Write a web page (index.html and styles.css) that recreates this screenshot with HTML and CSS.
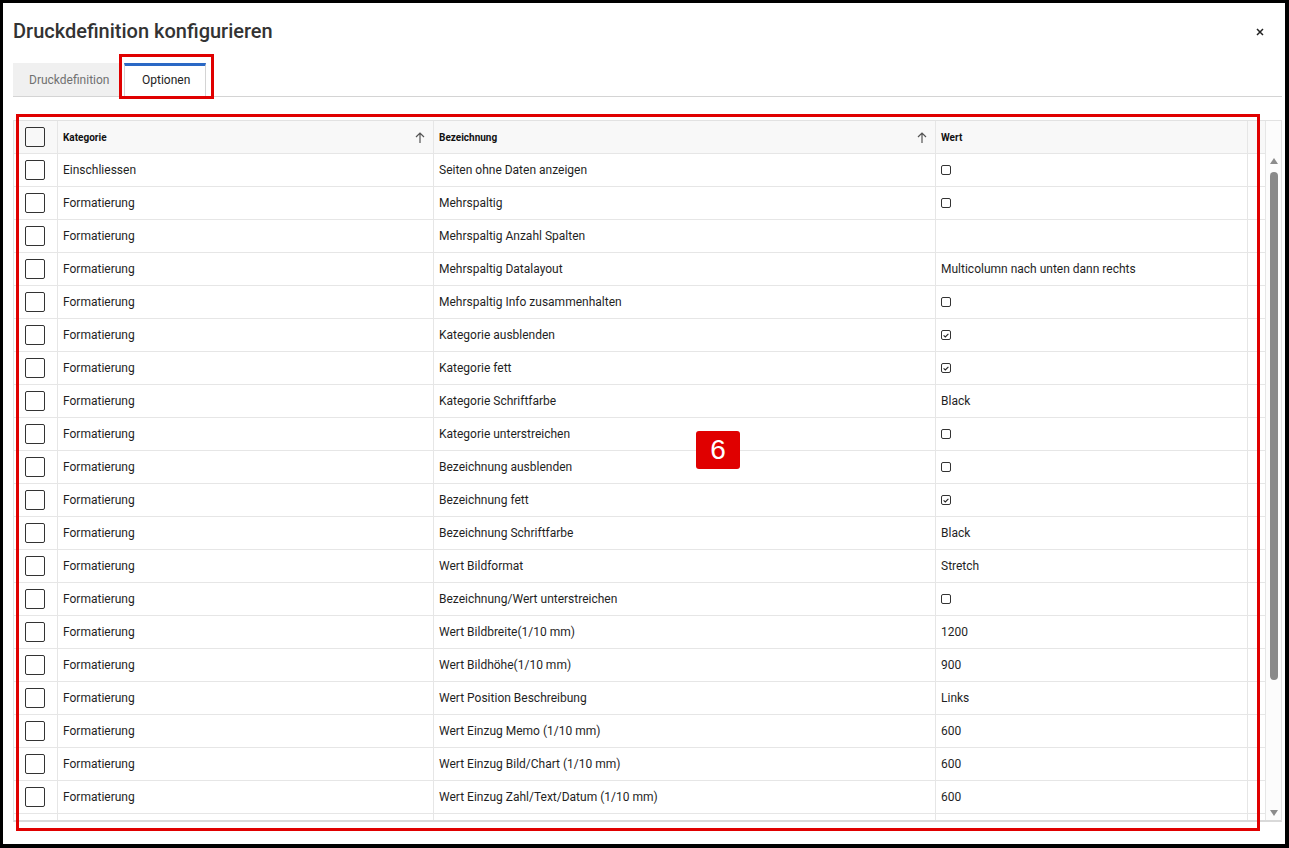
FILE: index.html
```html
<!DOCTYPE html>
<html lang="de">
<head>
    <meta charset="UTF-8">
    <title>Druckdefinition konfigurieren</title>
    <link rel="stylesheet" href="styles.css">
</head>
<body>
<div class="frame">
    <div class="dialog">
        <div class="dialog-head">
            <h1>Druckdefinition konfigurieren</h1>
            <span class="close">
                <svg width="8" height="8" viewBox="0 0 8 8"><path d="M1 1L7 7M7 1L1 7" stroke="#222" stroke-width="1.5" fill="none"/></svg>
            </span>
        </div>

        <div class="tabs">
            <div class="tab">Druckdefinition</div>
            <div class="tab active">Optionen</div>
        </div>

        <div class="grid">
            <div class="grid-main">
                <div class="row head">
                    <div class="cell sel"><span class="chk"></span></div>
                    <div class="cell">Kategorie <span class="sort"><svg width="10" height="11" viewBox="0 0 10 11"><path d="M5 1V11M1 5L5 1L9 5" stroke="#555" stroke-width="1.2" fill="none"/></svg></span></div>
                    <div class="cell">Bezeichnung <span class="sort"><svg width="10" height="11" viewBox="0 0 10 11"><path d="M5 1V11M1 5L5 1L9 5" stroke="#555" stroke-width="1.2" fill="none"/></svg></span></div>
                    <div class="cell">Wert</div>
                    <div class="cell gap"></div>
                </div>
                <div class="rows">
                    <div class="row"><div class="cell sel"><span class="chk"></span></div><div class="cell">Einschliessen</div><div class="cell">Seiten ohne Daten anzeigen</div><div class="cell"><span class="mini"></span></div><div class="cell gap"></div></div>
                    <div class="row"><div class="cell sel"><span class="chk"></span></div><div class="cell">Formatierung</div><div class="cell">Mehrspaltig</div><div class="cell"><span class="mini"></span></div><div class="cell gap"></div></div>
                    <div class="row"><div class="cell sel"><span class="chk"></span></div><div class="cell">Formatierung</div><div class="cell">Mehrspaltig Anzahl Spalten</div><div class="cell"></div><div class="cell gap"></div></div>
                    <div class="row"><div class="cell sel"><span class="chk"></span></div><div class="cell">Formatierung</div><div class="cell">Mehrspaltig Datalayout</div><div class="cell">Multicolumn nach unten dann rechts</div><div class="cell gap"></div></div>
                    <div class="row"><div class="cell sel"><span class="chk"></span></div><div class="cell">Formatierung</div><div class="cell">Mehrspaltig Info zusammenhalten</div><div class="cell"><span class="mini"></span></div><div class="cell gap"></div></div>
                    <div class="row"><div class="cell sel"><span class="chk"></span></div><div class="cell">Formatierung</div><div class="cell">Kategorie ausblenden</div><div class="cell"><span class="mini on"><svg width="6" height="5" viewBox="0 0 6 5"><path d="M0.6 2.4L2.3 4L5.4 0.8" stroke="#222" stroke-width="1.1" fill="none"/></svg></span></div><div class="cell gap"></div></div>
                    <div class="row"><div class="cell sel"><span class="chk"></span></div><div class="cell">Formatierung</div><div class="cell">Kategorie fett</div><div class="cell"><span class="mini on"><svg width="6" height="5" viewBox="0 0 6 5"><path d="M0.6 2.4L2.3 4L5.4 0.8" stroke="#222" stroke-width="1.1" fill="none"/></svg></span></div><div class="cell gap"></div></div>
                    <div class="row"><div class="cell sel"><span class="chk"></span></div><div class="cell">Formatierung</div><div class="cell">Kategorie Schriftfarbe</div><div class="cell">Black</div><div class="cell gap"></div></div>
                    <div class="row"><div class="cell sel"><span class="chk"></span></div><div class="cell">Formatierung</div><div class="cell">Kategorie unterstreichen</div><div class="cell"><span class="mini"></span></div><div class="cell gap"></div></div>
                    <div class="row"><div class="cell sel"><span class="chk"></span></div><div class="cell">Formatierung</div><div class="cell">Bezeichnung ausblenden</div><div class="cell"><span class="mini"></span></div><div class="cell gap"></div></div>
                    <div class="row"><div class="cell sel"><span class="chk"></span></div><div class="cell">Formatierung</div><div class="cell">Bezeichnung fett</div><div class="cell"><span class="mini on"><svg width="6" height="5" viewBox="0 0 6 5"><path d="M0.6 2.4L2.3 4L5.4 0.8" stroke="#222" stroke-width="1.1" fill="none"/></svg></span></div><div class="cell gap"></div></div>
                    <div class="row"><div class="cell sel"><span class="chk"></span></div><div class="cell">Formatierung</div><div class="cell">Bezeichnung Schriftfarbe</div><div class="cell">Black</div><div class="cell gap"></div></div>
                    <div class="row"><div class="cell sel"><span class="chk"></span></div><div class="cell">Formatierung</div><div class="cell">Wert Bildformat</div><div class="cell">Stretch</div><div class="cell gap"></div></div>
                    <div class="row"><div class="cell sel"><span class="chk"></span></div><div class="cell">Formatierung</div><div class="cell">Bezeichnung/Wert unterstreichen</div><div class="cell"><span class="mini"></span></div><div class="cell gap"></div></div>
                    <div class="row"><div class="cell sel"><span class="chk"></span></div><div class="cell">Formatierung</div><div class="cell">Wert Bildbreite(1/10 mm)</div><div class="cell">1200</div><div class="cell gap"></div></div>
                    <div class="row"><div class="cell sel"><span class="chk"></span></div><div class="cell">Formatierung</div><div class="cell">Wert Bildhöhe(1/10 mm)</div><div class="cell">900</div><div class="cell gap"></div></div>
                    <div class="row"><div class="cell sel"><span class="chk"></span></div><div class="cell">Formatierung</div><div class="cell">Wert Position Beschreibung</div><div class="cell">Links</div><div class="cell gap"></div></div>
                    <div class="row"><div class="cell sel"><span class="chk"></span></div><div class="cell">Formatierung</div><div class="cell">Wert Einzug Memo (1/10 mm)</div><div class="cell">600</div><div class="cell gap"></div></div>
                    <div class="row"><div class="cell sel"><span class="chk"></span></div><div class="cell">Formatierung</div><div class="cell">Wert Einzug Bild/Chart (1/10 mm)</div><div class="cell">600</div><div class="cell gap"></div></div>
                    <div class="row"><div class="cell sel"><span class="chk"></span></div><div class="cell">Formatierung</div><div class="cell">Wert Einzug Zahl/Text/Datum (1/10 mm)</div><div class="cell">600</div><div class="cell gap"></div></div>
                    <div class="row"><div class="cell sel"></div><div class="cell"></div><div class="cell"></div><div class="cell"></div><div class="cell gap"></div></div>
                </div>
            </div>
            <div class="vscroll">
                <span class="arrow up"></span>
                <span class="thumb"></span>
                <span class="arrow down"></span>
            </div>
        </div>
    </div>

    <!-- Markierungen -->
    <div class="mark mark-tab"></div>
    <div class="mark mark-grid"></div>
    <div class="badge">6</div>
</div>
</body>
</html>
```

FILE: styles.css
```css
* {
    box-sizing: border-box;
}
body {
    margin: 0;
    font-family: Roboto, "Liberation Sans", sans-serif;
    color: #1f1f1f;
    background: #fff;
}
.frame {
    position: relative;
    width: 1289px;
    height: 848px;
    border-style: solid;
    border-color: #000;
    border-width: 3px 4px 4px 3px;
    overflow: hidden;
}
.dialog {
    padding: 0 3px 0 10px;
}
.dialog-head {
    display: flex;
    align-items: center;
    justify-content: space-between;
    margin-top: 16px;
    height: 24px;
}
h1 {
    margin: 0;
    font-size: 20px;
    font-weight: 500;
    line-height: 24px;
    color: #333;
}
.close {
    display: flex;
    margin-right: 18px;
    margin-top: 1px;
}
.tabs {
    display: flex;
    margin-top: 20px;
    height: 34px;
    border-bottom: 1px solid #d4d4d4;
}
.tab {
    display: flex;
    align-items: center;
    padding: 0 16px;
    font-size: 12px;
    color: #707070;
    background: #f0f0f0;
    width: 108px;
}
.tab.active {
    margin-left: 3px;
    width: 82px;
    padding: 0 17px 3px;
    background: #fff;
    color: #222;
    border-top: 3px solid #2a68c5;
    border-left: 1px solid #d4d4d4;
    border-right: 1px solid #d4d4d4;
    margin-bottom: -1px;
}
.grid {
    display: flex;
    margin-top: 23px;
    height: 702px;
    border: 1px solid #e2e2e2;
    border-bottom: 2px solid #d9d9d9;
}
.grid-main {
    width: 1253px;
    display: flex;
    flex-direction: column;
    overflow: hidden;
}
.rows {
    flex: 1;
    overflow: hidden;
}
.row {
    display: grid;
    grid-template-columns: 44px 376px 502px 312px 19px;
    height: 33px;
    border-bottom: 1px solid #e6e6e6;
    font-size: 12px;
    flex-shrink: 0;
}
.row.head {
    background: #f8f8f8;
    font-size: 10px;
    font-weight: 700;
    color: #111;
}
.cell {
    display: flex;
    align-items: center;
    padding: 0 5px;
    border-right: 1px solid #e6e6e6;
    white-space: nowrap;
    overflow: hidden;
}
.cell.sel {
    justify-content: center;
    padding: 0;
    padding-right: 6px;
}
.cell.gap {
    padding: 0;
}
.sort {
    display: flex;
    margin-left: auto;
    margin-right: 3px;
}
.chk {
    display: block;
    width: 20px;
    height: 20px;
    border: 1.5px solid #333;
    border-radius: 2px;
    margin-left: 5px;
}
.mini {
    display: flex;
    align-items: center;
    justify-content: center;
    width: 10px;
    height: 10px;
    border: 1.3px solid #333;
    border-radius: 2px;
}
.vscroll {
    width: 16px;
    background: #fcfcfc;
    border-left: 1px solid #e6e6e6;
    display: flex;
    flex-direction: column;
    align-items: center;
    padding-top: 37px;
}
.arrow {
    width: 0;
    height: 0;
    border-left: 4px solid transparent;
    border-right: 4px solid transparent;
}
.arrow.up {
    border-bottom: 6px solid #8c8c8c;
}
.arrow.down {
    border-top: 6px solid #8c8c8c;
    margin-top: auto;
    margin-bottom: 4px;
}
.thumb {
    width: 8px;
    height: 508px;
    margin-top: 8px;
    border-radius: 4px;
    background: #8a8a8a;
}
.mark {
    position: absolute;
    border: 3px solid #e00000;
}
.mark-tab {
    left: 116px;
    top: 51px;
    width: 95px;
    height: 45px;
}
.mark-grid {
    left: 13px;
    top: 111px;
    width: 1244px;
    height: 717px;
}
.badge {
    position: absolute;
    left: 693px;
    top: 428px;
    width: 44px;
    height: 38px;
    background: #e00000;
    border-radius: 3px;
    color: #fff;
    font-family: "Liberation Sans", Arial, sans-serif;
    font-size: 28px;
    line-height: 38px;
    text-align: center;
}
```
